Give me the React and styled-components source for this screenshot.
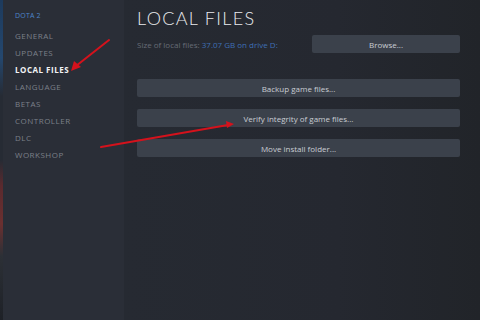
import React from 'react'
import styled, { createGlobalStyle } from 'styled-components'

const GlobalStyle = createGlobalStyle`
  html, body {
    margin: 0;
    padding: 0;
    background: #252830;
  }
  * {
    box-sizing: border-box;
  }
`

const Window = styled.div`
  position: relative;
  width: 480px;
  height: 320px;
  display: flex;
  overflow: hidden;
  font-family: 'Open Sans', 'Liberation Sans', sans-serif;
`

const EdgeStrip = styled.div`
  width: 3px;
  background: linear-gradient(
    180deg,
    #1d3a5c 0%,
    #24476e 18%,
    #262b34 30%,
    #262b34 50%,
    #5a2a2e 58%,
    #6b3030 70%,
    #2c3036 80%,
    #1e2127 100%
  );
`

const Sidebar = styled.nav`
  width: 121px;
  background: #2a2e37;
  padding: 11px 0 0 12px;
  display: flex;
  flex-direction: column;
`

const GameName = styled.div`
  font-size: 7px;
  color: #4d85c9;
  letter-spacing: 0.2px;
  height: 10px;
  line-height: 10px;
  margin-bottom: 6px;
`

const NavItem = styled.div`
  font-size: 8px;
  letter-spacing: 0.5px;
  height: 17px;
  line-height: 17px;
  color: ${(p) => (p.$active ? '#f2f3f5' : '#7b8089')};
  font-weight: ${(p) => (p.$active ? 700 : 400)};
`

const Main = styled.main`
  flex: 1;
  padding: 7px 20px 0 13px;
  background: linear-gradient(90deg, #262a32 0%, #252830 60%, #212429 100%);
  display: flex;
  flex-direction: column;
`

const Title = styled.h1`
  margin: 0;
  font-family: Lato, 'Open Sans', sans-serif;
  font-weight: 300;
  font-size: 18px;
  letter-spacing: 1.3px;
  color: #e9ebee;
  line-height: 23px;
`

const SizeRow = styled.div`
  display: flex;
  align-items: center;
  justify-content: space-between;
  margin-top: 5px;
`

const SizeText = styled.span`
  font-size: 8px;
  color: #666c76;
`

const SizeValue = styled.span`
  color: #3f6fb4;
`

const Button = styled.div`
  height: 18px;
  background: #3b414b;
  border-radius: 2px;
  color: #c9cdd3;
  font-size: 8px;
  display: flex;
  align-items: center;
  justify-content: center;
  width: ${(p) => (p.$wide ? '100%' : '148px')};
`

const ActionList = styled.div`
  display: flex;
  flex-direction: column;
  gap: 12px;
  margin-top: 26px;
`

const Arrows = styled.svg`
  position: absolute;
  left: 0;
  top: 0;
  pointer-events: none;
`

const navItems = [
  'GENERAL',
  'UPDATES',
  'LOCAL FILES',
  'LANGUAGE',
  'BETAS',
  'CONTROLLER',
  'DLC',
  'WORKSHOP'
]

const App = () => {
  return (
    <>
      <GlobalStyle />
      <Window>
        <EdgeStrip />
        <Sidebar>
          <GameName>DOTA 2</GameName>
          {navItems.map((item) => (
            <NavItem key={item} $active={item === 'LOCAL FILES'}>
              {item}
            </NavItem>
          ))}
        </Sidebar>
        <Main>
          <Title>LOCAL FILES</Title>
          <SizeRow>
            <SizeText>
              Size of local files: <SizeValue>37.07 GB on drive D:</SizeValue>
            </SizeText>
            <Button>Browse...</Button>
          </SizeRow>
          <ActionList>
            <Button $wide>Backup game files...</Button>
            <Button $wide>Verify integrity of game files...</Button>
            <Button $wide>Move install folder...</Button>
          </ActionList>
        </Main>
        <Arrows width="480" height="320" viewBox="0 0 480 320">
          <line x1="109" y1="40" x2="76" y2="66" stroke="#d4121c" strokeWidth="2" strokeLinecap="round" />
          <polygon points="71,71 74,61 81,67" fill="#d4121c" />
          <line x1="101" y1="147" x2="228" y2="125" stroke="#d4121c" strokeWidth="2" strokeLinecap="round" />
          <polygon points="234,124 226,121 227,128" fill="#d4121c" />
        </Arrows>
      </Window>
    </>
  )
}

export default App
